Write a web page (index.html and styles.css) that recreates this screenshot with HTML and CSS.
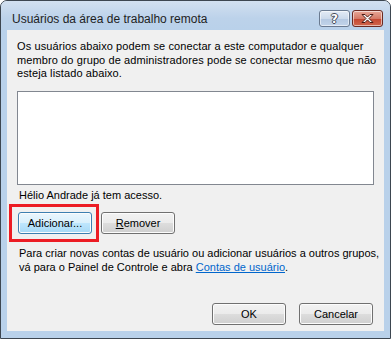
FILE: index.html
```html
<!DOCTYPE html>
<html lang="pt-BR">
<head>
    <meta charset="UTF-8">
    <title>Usuários da área de trabalho remota</title>
    <link rel="stylesheet" href="styles.css">
</head>
<body>
    <div class="window">
        <div class="titlebar">
            <span class="title">Usuários da área de trabalho remota</span>
            <div class="caption-buttons">
                <button class="cap-btn help"><span class="help-glyph">?</span></button>
                <button class="cap-btn close">
                    <svg width="15" height="11" viewBox="0 0 15 11">
                        <path d="M2 1.5h3l2.5 2.6 2.5-2.6h3l-4 4 4 4h-3l-2.5-2.6-2.5 2.6h-3l4-4z" fill="#fff" stroke="#4a1a14" stroke-width="1" stroke-linejoin="round"/>
                    </svg>
                </button>
            </div>
        </div>
        <div class="client">
            <p class="intro">Os usuários abaixo podem se conectar a este computador e qualquer<br>membro do grupo de administradores pode se conectar mesmo que não<br>esteja listado abaixo.</p>
            <div class="listbox"></div>
            <p class="status">Hélio Andrade já tem acesso.</p>
            <div class="row">
                <button class="btn focused marked">Adicionar...</button>
                <button class="btn"><u>R</u>emover</button>
            </div>
            <p class="hint">Para criar novas contas de usuário ou adicionar usuários a outros grupos,<br>vá para o Painel de Controle e abra <a href="#">Contas de usuário</a>.</p>
            <div class="row footer">
                <button class="btn">OK</button>
                <button class="btn">Cancelar</button>
            </div>
        </div>
    </div>
</body>
</html>
```

FILE: styles.css
```css
* {
    margin: 0;
    padding: 0;
    box-sizing: border-box;
}

body {
    background: #ffffff;
    font-family: 'Liberation Sans', Arial, sans-serif;
    font-size: 11px;
    color: #000;
}

.window {
    width: 391px;
    height: 339px;
    border: 1px solid #3d4650;
    border-radius: 7px 7px 0 0;
    background: #b9d1ea;
    padding: 0 6px 6px 6px;
    box-shadow: inset 0 1px 0 #e4edf7;
}

.titlebar {
    height: 29px;
    display: flex;
    justify-content: space-between;
    align-items: flex-start;
    margin: 0 -6px;
    padding: 0 7px 0 11px;
    border-radius: 6px 6px 0 0;
    background: linear-gradient(#d2e0f0, #bcd2ea 60%, #b9d1ea);
}

.title {
    font-size: 12px;
    line-height: 16px;
    margin-top: 10px;
    color: #1e1e1e;
}

.caption-buttons {
    display: flex;
    gap: 2px;
    margin-top: 9px;
}

.cap-btn {
    width: 31px;
    height: 17px;
    border: 1px solid #6a7a90;
    border-radius: 3px;
    display: flex;
    align-items: center;
    justify-content: center;
    box-shadow: inset 0 0 0 1px rgba(255, 255, 255, 0.55);
}

.help {
    background: linear-gradient(#e3ebf5, #ccdaeb 50%, #b4c8e1 51%, #c2d4ea);
}

.help-glyph {
    font-family: 'DejaVu Sans', sans-serif;
    font-weight: bold;
    font-size: 12px;
    line-height: 12px;
    color: #fff;
    text-shadow: 1px 0 0 #444c58, -1px 0 0 #444c58, 0 1px 0 #444c58, 0 -1px 0 #444c58;
}

.close {
    border-color: #6b2a22;
    background: linear-gradient(#e8a898, #d57a67 50%, #c4452f 51%, #d0664c);
}

.client {
    height: 301px;
    background: #f0f0f0;
    padding: 10px 10px 6px 10px;
    display: flex;
    flex-direction: column;
}

.intro {
    line-height: 13.5px;
    letter-spacing: 0.1px;
    white-space: nowrap;
    color: #000;
}

.listbox {
    height: 94px;
    margin-top: 10px;
    background: #fff;
    border: 1px solid #828790;
}

.status {
    line-height: 13px;
    margin-top: 4px;
    padding-left: 2px;
}

.row {
    display: flex;
    gap: 9px;
    margin-top: 10px;
    padding-left: 1px;
}

.btn {
    position: relative;
    width: 74px;
    height: 22px;
    font-family: 'Liberation Sans', Arial, sans-serif;
    font-size: 11px;
    color: #000;
    border: 1px solid #707070;
    border-radius: 3px;
    background: linear-gradient(#f2f2f2, #ebebeb 50%, #dddddd 51%, #cfcfcf);
    box-shadow: inset 0 0 0 1px #fcfcfc;
}

.btn u {
    text-decoration: underline;
}

.btn.focused {
    border-color: #3c7fb1;
    background: linear-gradient(#eaf6fd, #d9f0fc 50%, #bee6fd 51%, #a7d9f5);
}

.marked::after {
    content: '';
    position: absolute;
    top: -9px;
    left: -10px;
    right: -8px;
    bottom: -9px;
    border: 3px solid #ec1c24;
}

.hint {
    line-height: 14px;
    margin-top: 12px;
    padding-left: 2px;
    white-space: nowrap;
}

.hint a {
    color: #0066cc;
}

.footer {
    margin-top: auto;
    justify-content: flex-end;
    gap: 13px;
    padding-left: 0;
    padding-right: 1px;
}
```
